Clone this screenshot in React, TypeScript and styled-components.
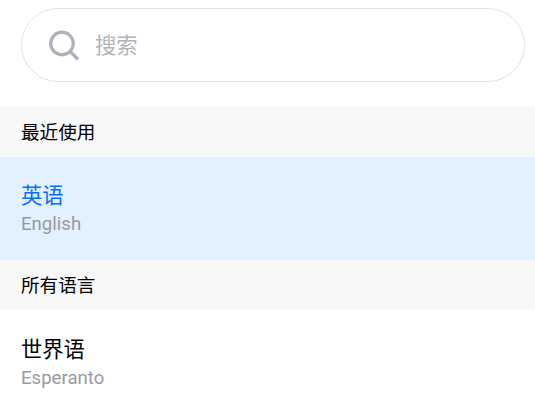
import { createGlobalStyle } from "styled-components";
import styled from "styled-components";

interface Language {
  name: string;
  native: string;
}

const GlobalStyle = createGlobalStyle`
  html, body {
    margin: 0;
    padding: 0;
    background: #fff;
    overflow: hidden;
  }
  body {
    font-family: Roboto, "Noto Sans CJK SC", sans-serif;
  }
`;

const Page = styled.div`
  width: 535px;
  height: 413px;
  overflow: hidden;
`;

const SearchArea = styled.div`
  padding: 8px 10px 25px 21px;
`;

const SearchBox = styled.div`
  display: flex;
  align-items: center;
  height: 74px;
  box-sizing: border-box;
  padding-left: 26px;
  gap: 15px;
  border: 1px solid #e2e3e6;
  border-radius: 37px;
`;

const SearchIcon = styled.svg`
  width: 32px;
  height: 32px;
  flex: none;
`;

const SearchText = styled.span`
  font-size: 21.3px;
  line-height: 30px;
  margin-top: 2px;
  color: #b0b3bc;
`;

const SectionHeader = styled.div`
  display: flex;
  align-items: center;
  height: 50px;
  padding-left: 21px;
  padding-bottom: 4px;
  box-sizing: border-box;
  background: #f8f8f8;
  font-size: 18.6px;
  color: #000;
`;

const LanguageRow = styled.div<{ $active?: boolean }>`
  display: flex;
  flex-direction: column;
  justify-content: center;
  height: 103px;
  padding-left: 21px;
  padding-top: ${({ $active }) => ($active ? "1px" : "3px")};
  box-sizing: border-box;
  background: ${({ $active }) => ($active ? "#e3f0ff" : "#fff")};
`;

const LanguageName = styled.div<{ $active?: boolean }>`
  font-size: 21.3px;
  line-height: 30px;
  color: ${({ $active }) => ($active ? "#0a6cff" : "#000")};
`;

const LanguageNative = styled.div`
  font-size: 18.6px;
  line-height: 26px;
  color: #999aa0;
`;

const recent: Language = { name: "英语", native: "English" };
const all: Language = { name: "世界语", native: "Esperanto" };

const App = () => {
  return (
    <Page>
      <GlobalStyle />
      <SearchArea>
        <SearchBox>
          <SearchIcon viewBox="0 0 32 32" fill="none">
            <circle cx="14" cy="14.5" r="11.3" stroke="#aeb1ba" strokeWidth="3.2" />
            <path d="M23 23.5l6.2 6" stroke="#aeb1ba" strokeWidth="3.2" strokeLinecap="round" />
          </SearchIcon>
          <SearchText>搜索</SearchText>
        </SearchBox>
      </SearchArea>
      <SectionHeader>最近使用</SectionHeader>
      <LanguageRow $active>
        <LanguageName $active>{recent.name}</LanguageName>
        <LanguageNative>{recent.native}</LanguageNative>
      </LanguageRow>
      <SectionHeader>所有语言</SectionHeader>
      <LanguageRow>
        <LanguageName>{all.name}</LanguageName>
        <LanguageNative>{all.native}</LanguageNative>
      </LanguageRow>
    </Page>
  );
};

export default App;
